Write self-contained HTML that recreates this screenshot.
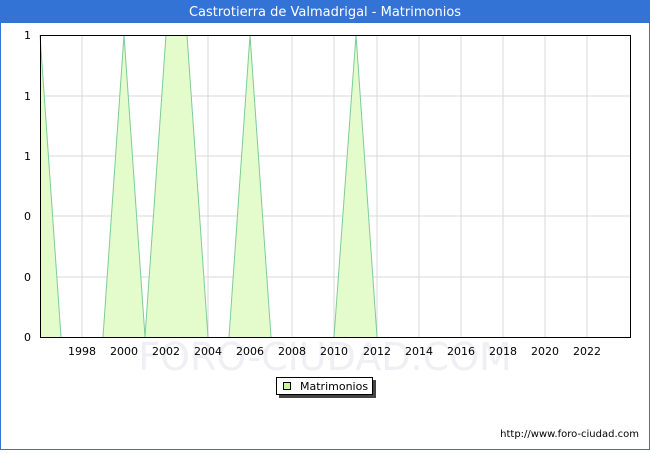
<!DOCTYPE html><html><head><style>
body{margin:0;width:650px;height:450px;overflow:hidden;background:#fff;font-family:"DejaVu Sans","Liberation Sans",sans-serif}
</style></head><body>
<svg width="650" height="450" xmlns="http://www.w3.org/2000/svg" font-family="DejaVu Sans, Liberation Sans, sans-serif">
<rect x="0.5" y="0.5" width="649" height="449" fill="#fff" stroke="#3373d6"/>
<rect x="0" y="0" width="650" height="23" fill="#3373d6"/>
<text x="325" y="16" fill="#fff" font-size="13" text-anchor="middle">Castrotierra de Valmadrigal - Matrimonios</text>
<g stroke="#d8d8d8" stroke-width="1">
<line x1="82" y1="35" x2="82" y2="337"/><line x1="124" y1="35" x2="124" y2="337"/><line x1="166" y1="35" x2="166" y2="337"/><line x1="208" y1="35" x2="208" y2="337"/><line x1="250" y1="35" x2="250" y2="337"/><line x1="292" y1="35" x2="292" y2="337"/><line x1="334" y1="35" x2="334" y2="337"/><line x1="377" y1="35" x2="377" y2="337"/><line x1="419" y1="35" x2="419" y2="337"/><line x1="461" y1="35" x2="461" y2="337"/><line x1="503" y1="35" x2="503" y2="337"/><line x1="545" y1="35" x2="545" y2="337"/><line x1="587" y1="35" x2="587" y2="337"/>
<line x1="40" y1="96" x2="630" y2="96"/><line x1="40" y1="156" x2="630" y2="156"/><line x1="40" y1="216" x2="630" y2="216"/><line x1="40" y1="277" x2="630" y2="277"/>
</g>
<text x="325" y="370" font-size="38" fill="#f0f0f4" text-anchor="middle">FORO-CIUDAD.COM</text>
<path d="M40,35 L61,337 L103,337 L124,35 L145,337 L166,35 L187,35 L208,337 L229,337 L250,35 L271,337 L334,337 L356,35 L377,337 L40,337Z" fill="#e4fccc"/>
<path d="M40,35 L61,337 M103,337 L124,35 L145,337 L166,35 M187,35 L208,337 M229,337 L250,35 L271,337 M334,337 L356,35 L377,337" fill="none" stroke="#7ccc99" stroke-width="1"/>
<rect x="40.5" y="35.5" width="590" height="302" fill="none" stroke="#000"/>
<g font-size="11" fill="#000" text-anchor="end">
<text x="31" y="39">1</text><text x="31" y="100">1</text><text x="31" y="160">1</text><text x="31" y="220">0</text><text x="31" y="281">0</text><text x="31" y="341">0</text>
</g>
<g font-size="11" fill="#000" text-anchor="middle">
<text x="82" y="355">1998</text><text x="124" y="355">2000</text><text x="166" y="355">2002</text><text x="208" y="355">2004</text><text x="250" y="355">2006</text><text x="292" y="355">2008</text><text x="334" y="355">2010</text><text x="377" y="355">2012</text><text x="419" y="355">2014</text><text x="461" y="355">2016</text><text x="503" y="355">2018</text><text x="545" y="355">2020</text><text x="587" y="355">2022</text>
</g>
<rect x="279" y="380" width="97" height="18" fill="#444"/>
<rect x="276.5" y="377.5" width="96" height="17" fill="#fff" stroke="#000"/>
<rect x="283.5" y="382.5" width="7" height="7" fill="#ccf5a0" stroke="#000"/>
<text x="300" y="390" font-size="11">Matrimonios</text>
<text x="639" y="437" font-size="10" text-anchor="end">http://www.foro-ciudad.com</text>
</svg>
</body></html>
